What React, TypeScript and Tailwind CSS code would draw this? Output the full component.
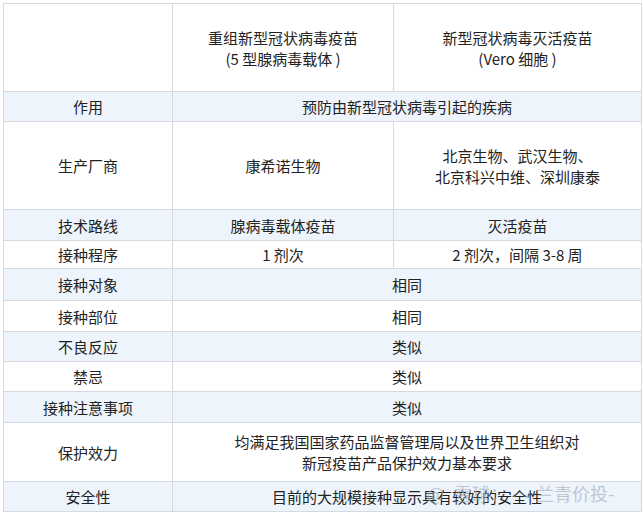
import React from 'react';

type Row = {
  label: string;
  cells: React.ReactNode[];
  h: string;
  blue: boolean;
};

const rows: Row[] = [
  { label: '作用', cells: ['预防由新型冠状病毒引起的疾病'], h: 'h-[30px]', blue: true },
  {
    label: '生产厂商',
    cells: [
      '康希诺生物',
      <>
        北京生物、武汉生物、
        <br />
        北京科兴中维、深圳康泰
      </>,
    ],
    h: 'h-[88px]',
    blue: false,
  },
  { label: '技术路线', cells: ['腺病毒载体疫苗', '灭活疫苗'], h: 'h-[31px]', blue: true },
  { label: '接种程序', cells: ['1 剂次', '2 剂次，间隔 3-8 周'], h: 'h-[28px]', blue: false },
  { label: '接种对象', cells: ['相同'], h: 'h-[32px]', blue: true },
  { label: '接种部位', cells: ['相同'], h: 'h-[31px]', blue: false },
  { label: '不良反应', cells: ['类似'], h: 'h-[30px]', blue: true },
  { label: '禁忌', cells: ['类似'], h: 'h-[30px]', blue: false },
  { label: '接种注意事项', cells: ['类似'], h: 'h-[31px]', blue: true },
  {
    label: '保护效力',
    cells: [
      <>
        均满足我国国家药品监督管理局以及世界卫生组织对
        <br />
        新冠疫苗产品保护效力基本要求
      </>,
    ],
    h: 'h-[59px]',
    blue: false,
  },
  { label: '安全性', cells: ['目前的大规模接种显示具有较好的安全性'], h: 'h-[30px]', blue: true },
];

export default function App() {
  return (
    <div className="relative w-[644px] h-[513px] bg-white pt-[3px] pl-[3px] overflow-hidden">
      <table
        className="table-fixed border-collapse w-[638px] text-[15px] leading-[21px] text-[#222] text-center"
        style={{ fontFamily: '"Noto Sans CJK SC", "Noto Sans", sans-serif' }}
      >
        <colgroup>
          <col className="w-[169px]" />
          <col className="w-[221px]" />
          <col className="w-[248px]" />
        </colgroup>
        <tbody>
          <tr className="h-[88px] bg-white">
            <td className="border border-[#d6dae0]" />
            <td className="border border-[#d6dae0] align-middle">
              重组新型冠状病毒疫苗
              <br />
              (5 型腺病毒载体 )
            </td>
            <td className="border border-[#d6dae0] align-middle">
              新型冠状病毒灭活疫苗
              <br />
              (Vero 细胞 )
            </td>
          </tr>
          {rows.map((r) => (
            <tr key={r.label} className={`${r.h} ${r.blue ? 'bg-[#eef4fb]' : 'bg-white'}`}>
              <td className="border border-[#d6dae0] p-0 align-middle">{r.label}</td>
              {r.cells.length === 1 ? (
                <td colSpan={2} className="border border-[#d6dae0] p-0 align-middle">
                  {r.cells[0]}
                </td>
              ) : (
                r.cells.map((c, i) => (
                  <td key={i} className="border border-[#d6dae0] p-0 align-middle">
                    {c}
                  </td>
                ))
              )}
            </tr>
          ))}
        </tbody>
      </table>
      {/* watermark */}
      <div
        className="absolute left-[427px] top-[481px] flex items-center text-[18px] leading-[24px] text-[#aab2bb]/70 pointer-events-none"
        style={{ fontFamily: '"Noto Sans CJK SC", sans-serif' }}
      >
        <span>@</span>
        <span className="ml-[10px]">雪球：</span>
        <span className="ml-[28px]">兰青价投-</span>
      </div>
    </div>
  );
}
